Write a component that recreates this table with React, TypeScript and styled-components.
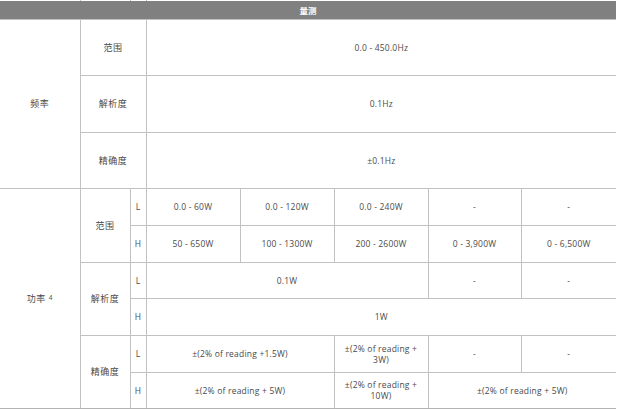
import React from "react";
import styled, { createGlobalStyle } from "styled-components";

const Global = createGlobalStyle`
  html, body { margin: 0; padding: 0; background: #fff; }
  body { font-family: "Open Sans", "Noto Sans CJK SC", sans-serif; }
`;

const Wrap = styled.div`
  width: 616px;
  border-bottom: 1px solid #b4b4b4;
`;

const Table = styled.table`
  width: 616px;
  table-layout: fixed;
  border-collapse: collapse;
  border-style: hidden;
`;

const Cell = styled.td`
  border: 1px solid #c2c2c2;
  padding: 0 8px;
  text-align: center;
  vertical-align: middle;
  font-family: "Open Sans", "Noto Sans CJK SC", sans-serif;
  font-size: 8.5px;
  line-height: 11px;
  color: #4a4a4a;
  letter-spacing: 0.2px;
`;

const Label = styled(Cell)`
  font-family: "Noto Sans CJK SC", sans-serif;
  font-size: 9px;
  letter-spacing: 0.5px;
  padding: 0;
`;

const Tag = styled(Cell)`
  padding: 0;
  font-size: 8.5px;
  letter-spacing: 0;
`;

const StubRow = styled.tr`
  height: 1px;
  td {
    padding: 0;
    font-size: 0;
    line-height: 0;
    height: 1px;
    border-top: none;
    border-bottom: none;
  }
`;

const HeadRow = styled.tr`
  height: 18px;
`;

const HeadCell = styled.th`
  background: #808080;
  color: #fff;
  font-family: "Noto Sans CJK SC", sans-serif;
  font-size: 8.5px;
  font-weight: 700;
  padding: 0;
  border: none;
  text-align: center;
  vertical-align: middle;
`;

const Row = styled.tr<{ $h: number }>`
  height: ${(p) => p.$h}px;
`;

const Sup = styled.sup`
  font-size: 6.5px;
  vertical-align: 2px;
  margin-left: 3px;
  font-family: "Open Sans", sans-serif;
`;

const Col = styled.col<{ $w: number }>`
  width: ${(p) => p.$w}px;
`;

const widths = [80, 50, 16, 94, 94, 94, 93, 95];

export default function App() {
  return (
    <>
      <Global />
      <Wrap>
        <Table>
          <colgroup>
            {widths.map((w, i) => (
              <Col key={i} $w={w} />
            ))}
          </colgroup>
          <tbody>
            <StubRow>
              <Cell />
              <Cell />
              <Cell />
              <Cell colSpan={5} />
            </StubRow>
            <HeadRow>
              <HeadCell colSpan={8}>量测</HeadCell>
            </HeadRow>
            <Row $h={56}>
              <Label rowSpan={3}>频率</Label>
              <Label colSpan={2}>范围</Label>
              <Cell colSpan={5}>0.0 - 450.0Hz</Cell>
            </Row>
            <Row $h={57}>
              <Label colSpan={2}>解析度</Label>
              <Cell colSpan={5}>0.1Hz</Cell>
            </Row>
            <Row $h={56}>
              <Label colSpan={2}>精确度</Label>
              <Cell colSpan={5}>±0.1Hz</Cell>
            </Row>
            <Row $h={37}>
              <Label rowSpan={6}>
                功率<Sup>4</Sup>
              </Label>
              <Label rowSpan={2}>范围</Label>
              <Tag>L</Tag>
              <Cell>0.0 - 60W</Cell>
              <Cell>0.0 - 120W</Cell>
              <Cell>0.0 - 240W</Cell>
              <Cell>-</Cell>
              <Cell>-</Cell>
            </Row>
            <Row $h={37}>
              <Tag>H</Tag>
              <Cell>50 - 650W</Cell>
              <Cell>100 - 1300W</Cell>
              <Cell>200 - 2600W</Cell>
              <Cell>0 - 3,900W</Cell>
              <Cell>0 - 6,500W</Cell>
            </Row>
            <Row $h={36}>
              <Label rowSpan={2}>解析度</Label>
              <Tag>L</Tag>
              <Cell colSpan={3}>0.1W</Cell>
              <Cell>-</Cell>
              <Cell>-</Cell>
            </Row>
            <Row $h={37}>
              <Tag>H</Tag>
              <Cell colSpan={5}>1W</Cell>
            </Row>
            <Row $h={37}>
              <Label rowSpan={2}>精确度</Label>
              <Tag>L</Tag>
              <Cell colSpan={2}>±(2% of reading +1.5W)</Cell>
              <Cell>±(2% of reading + 3W)</Cell>
              <Cell>-</Cell>
              <Cell>-</Cell>
            </Row>
            <Row $h={36}>
              <Tag>H</Tag>
              <Cell colSpan={2}>±(2% of reading + 5W)</Cell>
              <Cell>±(2% of reading + 10W)</Cell>
              <Cell colSpan={2}>±(2% of reading + 5W)</Cell>
            </Row>
          </tbody>
        </Table>
      </Wrap>
    </>
  );
}
